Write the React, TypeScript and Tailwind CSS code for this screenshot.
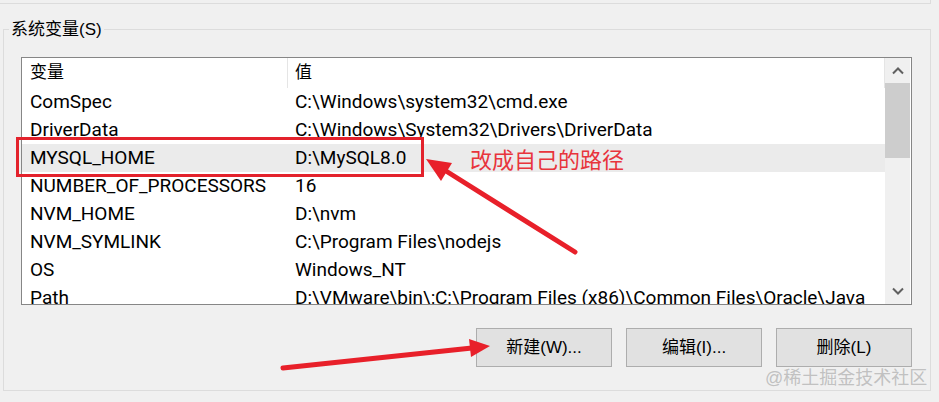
import React from "react";

const FONT = '"Liberation Sans", "Noto Sans CJK SC", sans-serif';
const LIST_FONT = 'Roboto, "Noto Sans CJK SC", sans-serif';

const ROWS = [
  { name: "ComSpec", value: "C:\\Windows\\system32\\cmd.exe" },
  { name: "DriverData", value: "C:\\Windows\\System32\\Drivers\\DriverData" },
  { name: "MYSQL_HOME", value: "D:\\MySQL8.0", selected: true },
  { name: "NUMBER_OF_PROCESSORS", value: "16" },
  { name: "NVM_HOME", value: "D:\\nvm" },
  { name: "NVM_SYMLINK", value: "C:\\Program Files\\nodejs" },
  { name: "OS", value: "Windows_NT" },
  { name: "Path", value: "D:\\VMware\\bin\\;C:\\Program Files (x86)\\Common Files\\Oracle\\Java" },
];

function Chevron({ down }: { down?: boolean }) {
  return (
    <svg width="12" height="8" viewBox="0 0 12 8">
      <path
        d={down ? "M1 1.5 L6 6.5 L11 1.5" : "M1 6.5 L6 1.5 L11 6.5"}
        fill="none"
        stroke="#606060"
        strokeWidth="2"
      />
    </svg>
  );
}

function Button({ label }: { label: string }) {
  return (
    <button className="w-[136px] h-[39px] bg-[#e1e1e1] border border-[#adadad] text-[17px] text-black flex items-center justify-center">
      {label}
    </button>
  );
}

export default function App() {
  return (
    <div
      className="relative w-[939px] h-[402px] bg-[#f0f0f0] overflow-hidden text-black"
      style={{ fontFamily: FONT }}>
      {/* edge of the panel above */}
      <div className="h-[4px] w-[931px] border-b border-r border-[#dcdcdc]" />

      {/* group box */}
      <div className="mt-[25px] ml-[3px] w-[928px] h-[362px] border border-[#dcdcdc] flex flex-col">
        <div className="-mt-[10px] ml-[5px] w-fit px-[2px] bg-[#f0f0f0] text-[17px] leading-[20px]">
          系统变量(S)
        </div>

        {/* list view */}
        <div
          className="mt-[17px] ml-[17px] w-[891px] h-[248px] shrink-0 border border-[#868686] bg-white flex"
          style={{ fontFamily: LIST_FONT }}>
          <div className="flex-1 flex flex-col overflow-hidden">
            <div className="h-[30px] shrink-0 grid grid-cols-[266px_1fr] text-[17px] border-r border-[#e5e5e5]">
              <div className="pl-[8px] flex items-center border-r border-[#e5e5e5]">变量</div>
              <div className="pl-[7px] flex items-center">值</div>
            </div>
            {ROWS.map((r) =>
              <div
                key={r.name}
                className={`h-[28px] shrink-0 grid grid-cols-[266px_1fr] text-[19px] whitespace-nowrap ${r.selected ? "bg-[#ebebeb]" : ""}`}>
                <div className="pl-[8px] flex items-center overflow-hidden">{r.name}</div>
                <div className="pl-[7px] flex items-center overflow-hidden">{r.value}</div>
              </div>
            )}
          </div>
          {/* scrollbar */}
          <div className="w-[25px] mr-[1px] bg-[#f0f0f0] flex flex-col">
            <div className="h-[25px] flex items-center justify-center">
              <Chevron />
            </div>
            <div className="h-[75px] bg-[#cdcdcd]" />
            <div className="flex-1" />
            <div className="h-[26px] flex items-center justify-center">
              <Chevron down />
            </div>
          </div>
        </div>

        {/* buttons */}
        <div className="mt-[23px] mr-[18px] flex justify-end gap-[14px]">
          <Button label="新建(W)..." />
          <Button label="编辑(I)..." />
          <Button label="删除(L)" />
        </div>
      </div>

      {/* annotations */}
      <div className="absolute left-[16px] top-[137px] w-[408px] h-[40px] border-[3px] border-[#e3222c]" />
      <div className="absolute left-[470px] top-[147px] text-[22px] leading-[28px] text-[#e8343c]">
        改成自己的路径
      </div>
      <svg className="absolute left-0 top-0 pointer-events-none" width="939" height="402" viewBox="0 0 939 402">
        <line x1="575" y1="252" x2="446" y2="171" stroke="#e8202a" strokeWidth="5" strokeLinecap="round" />
        <polygon points="426,159 452,163 441,181" fill="#e8202a" />
        <line x1="283" y1="368" x2="472" y2="348" stroke="#e8202a" strokeWidth="5" strokeLinecap="round" />
        <polygon points="490,346 469,339 471,357" fill="#e8202a" />
      </svg>

      {/* watermark */}
      <div className="absolute left-[765px] top-[367px] text-[18px] leading-[22px] text-[#b4b4b4]/80">
        @稀土掘金技术社区
      </div>
    </div>
  );
}
